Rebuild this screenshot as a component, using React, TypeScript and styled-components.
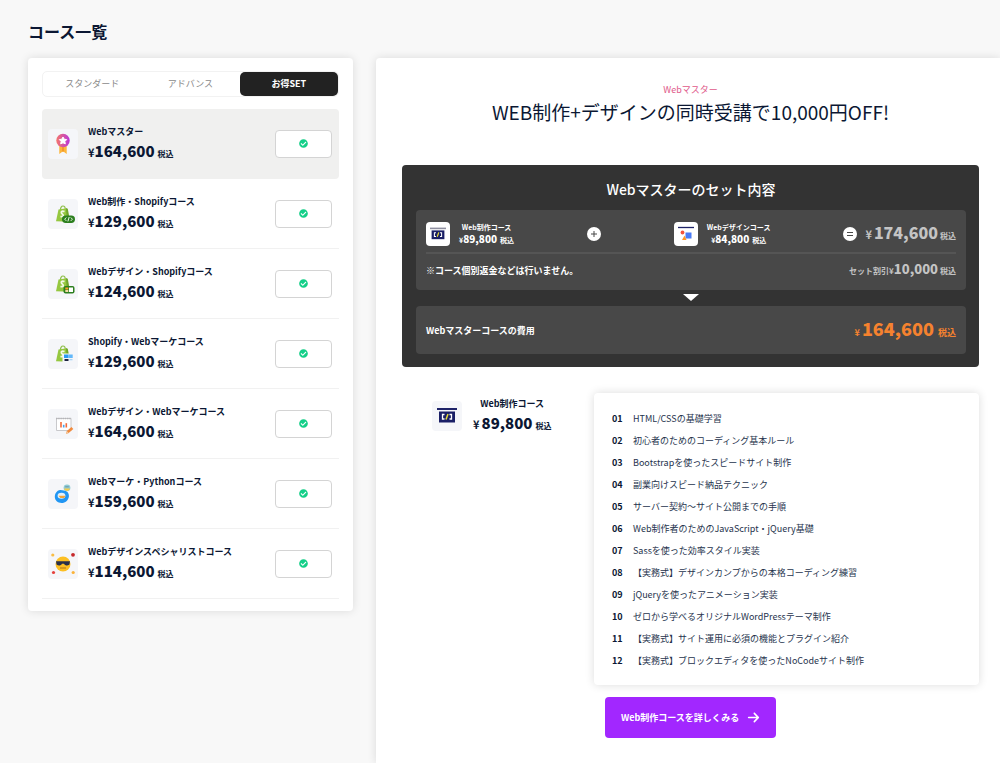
import React, { useState } from 'react';
import styled, { createGlobalStyle } from 'styled-components';
import { FaCheckCircle } from 'react-icons/fa';
import { FaArrowRight } from 'react-icons/fa6';

const GlobalStyle = createGlobalStyle`
  * { box-sizing: border-box; }
  body {
    margin: 0;
    background: #f8f8f8;
    color: #0b1733;
    font-family: "Noto Sans CJK JP", "Noto Sans", sans-serif;
    font-size: 9px;
  }
  h1, h2, h3, p, ul, ol { margin: 0; padding: 0; }
  ul, ol { list-style: none; }
  button { font: inherit; cursor: pointer; }
`;

const Page = styled.div`
  display: flex;
  flex-direction: column;
  min-height: 100vh;
  padding-left: 28px;
  overflow: hidden;
`;

const PageTitle = styled.h1`
  padding: 19px 0 15px;
  font-size: 16px;
  line-height: 24px;
  font-weight: 700;
`;

const Columns = styled.div`
  flex: 1;
  display: grid;
  grid-template-columns: 325px minmax(0, 1fr);
  gap: 23px;
`;

const Sidebar = styled.aside`
  align-self: start;
  padding: 13px 14px 12px;
  background: #fff;
  border-radius: 4px;
  box-shadow: 0 0 10px rgba(0, 0, 0, 0.12);
`;

const Tabs = styled.div`
  display: grid;
  grid-template-columns: repeat(3, 1fr);
  margin-bottom: 12px;
  border: 1px solid #f2f2f2;
  border-radius: 5px;
`;

const Tab = styled.button<{ $active: boolean }>`
  height: 24px;
  padding: 0 0 2px;
  border: 0;
  border-radius: 5px;
  background: ${(p) => (p.$active ? '#222' : 'transparent')};
  color: ${(p) => (p.$active ? '#fff' : '#8a8a8a')};
  font-weight: ${(p) => (p.$active ? 700 : 400)};
`;

const CourseRow = styled.li<{ $selected: boolean }>`
  display: flex;
  align-items: center;
  gap: 10px;
  height: 70px;
  padding: 0 7px 0 6px;
  border-bottom: 1px solid ${(p) => (p.$selected ? 'transparent' : '#f1f1f1')};
  border-radius: ${(p) => (p.$selected ? '4px' : '0')};
  background: ${(p) => (p.$selected ? '#f0f0ef' : 'transparent')};
`;

const IconTile = styled.span<{ $size: number; $solid?: boolean }>`
  flex: none;
  display: grid;
  place-items: center;
  width: ${(p) => p.$size}px;
  height: ${(p) => p.$size}px;
  border-radius: 4px;
  background: ${(p) => (p.$solid ? '#fff' : '#f5f6f9')};
  svg { display: block; }
`;

const CourseText = styled.div<{ $centered?: boolean }>`
  flex: ${(p) => (p.$centered ? 'none' : '1')};
  padding-top: 2px;
  text-align: ${(p) => (p.$centered ? 'center' : 'left')};
`;

const CourseName = styled.h3<{ $small?: boolean }>`
  font-size: ${(p) => (p.$small ? 7 : 9)}px;
  line-height: ${(p) => (p.$small ? 10 : 14)}px;
  font-weight: 700;
`;

const PriceLine = styled.p<{ $size: number; $height: number; $color?: string; $centered?: boolean }>`
  display: flex;
  align-items: baseline;
  justify-content: ${(p) => (p.$centered ? 'center' : 'flex-start')};
  color: ${(p) => p.$color ?? 'inherit'};
  line-height: ${(p) => p.$height}px;
  font-weight: 700;
  white-space: nowrap;
  strong { font-size: ${(p) => p.$size}px; }
`;

const Yen = styled.span<{ $size: number; $gap?: number }>`
  font-size: ${(p) => p.$size}px;
  margin-right: ${(p) => p.$gap ?? 0}px;
`;

const Tax = styled.small<{ $size: number; $gap?: number }>`
  font-size: ${(p) => p.$size}px;
  margin-left: ${(p) => p.$gap ?? 3}px;
`;

const CheckButton = styled.button`
  display: grid;
  place-items: center;
  width: 57px;
  height: 28px;
  padding: 0;
  border: 1px solid #d4d4d4;
  border-radius: 4px;
  background: #fff;
  color: #14cf88;
`;

const Detail = styled.main`
  padding: 24px 21px 25px 26px;
  background: #fff;
  border-top-left-radius: 4px;
  box-shadow: 0 0 10px rgba(0, 0, 0, 0.12);
`;

const DetailHead = styled.header`
  margin-bottom: 39px;
  text-align: center;
`;

const Kicker = styled.p`
  color: #e0598a;
  line-height: 16px;
`;

const Headline = styled.h2`
  font-size: 19px;
  line-height: 28px;
  font-weight: 400;
`;

const SetPanel = styled.section`
  padding: 12px 13px 13px 14px;
  border-radius: 4px;
  background: #333;
  color: #fff;
`;

const SetTitle = styled.h3`
  margin-bottom: 9px;
  font-size: 14px;
  line-height: 24px;
  font-weight: 500;
  text-align: center;
`;

const SetBox = styled.div`
  padding: 0 10px;
  border-radius: 4px;
  background: #484848;
`;

const SetRow = styled.div<{ $height: number; $top?: number; $bottom?: number; $line?: boolean }>`
  display: flex;
  align-items: center;
  justify-content: space-between;
  height: ${(p) => p.$height}px;
  padding-top: ${(p) => p.$top ?? 0}px;
  padding-bottom: ${(p) => p.$bottom ?? 0}px;
  border-bottom: ${(p) => (p.$line ? '2px solid #555' : '0')};
  font-weight: 700;
`;

const Group = styled.div<{ $gap: number }>`
  display: flex;
  align-items: center;
  gap: ${(p) => p.$gap}px;
`;

const Down = styled.svg`
  display: block;
  margin: 4px auto 5px;
`;

const CourseDetail = styled.section`
  display: grid;
  grid-template-columns: 192px minmax(0, 1fr);
  margin-top: 26px;
`;

const CourseSummary = styled.div`
  display: flex;
  align-items: flex-start;
  gap: 11px;
  padding: 2px 0 0 30px;
  ${IconTile} { margin-top: 6px; }
`;

const Lessons = styled.ol`
  padding: 15px 18px 13px;
  border-radius: 4px;
  background: #fff;
  box-shadow: 0 0 10px rgba(0, 0, 0, 0.14);
`;

const Lesson = styled.li`
  display: grid;
  grid-template-columns: 21px minmax(0, 1fr);
  line-height: 22px;
  color: #26334d;
  b { color: #0b1733; }
`;

const MoreLink = styled.a`
  display: inline-flex;
  align-items: center;
  justify-content: center;
  gap: 8px;
  height: 41px;
  margin: 12px 0 0 11px;
  padding: 0 16px;
  border-radius: 4px;
  background: #a227ff;
  color: #fff;
  font-weight: 700;
  text-decoration: none;
`;

const Medal = () => (
  <svg width="18" height="24" viewBox="0 0 18 24" aria-hidden="true">
    <defs>
      <linearGradient id="medal" x1="0" x2="1">
        <stop offset="0" stopColor="#f4766c" />
        <stop offset="1" stopColor="#b936d8" />
      </linearGradient>
    </defs>
    <path d="M5.300 12v10l3.700-2.700 3.700 2.700V12z" fill="#fcb53b" />
    <path d="M8 13v7l1-.8 1 .8V13z" fill="#f39a2b" />
    <circle cx="9" cy="8.500" r="6.700" fill="url(#medal)" />
    <path d="M9 5l1.200 2.200 2.500.4-1.800 1.800.4 2.500L9 10.800l-2.300 1.100.4-2.500-1.800-1.800 2.500-.4z" fill="#fff" stroke="#fff" strokeWidth="1" strokeLinejoin="round" />
  </svg>
);

const Bag = ({ kind }: { kind: 'code' | 'design' | 'market' }) => (
  <svg width="30" height="30" viewBox="0 0 30 30" aria-hidden="true">
    <path d="M12.500 11c0-2.500 1-4 2.500-4s2.300 1.500 2.300 3.500" fill="none" stroke="#8fbf4a" strokeWidth="1.200" />
    <path d="M10.500 10.500l8.500-1.300 2.500 13.500-13.500-.4z" fill="#95c740" />
    <path d="M18 9.300l1.800.5 2.200 12.500-3 .5z" fill="#6fa52a" />
    <path d="M16.500 12.600c-2.600-1.400-4.200.7-2.300 2.300 2 1.600 1.200 3.600-1.700 2.400" fill="none" stroke="#f4f9e8" strokeWidth="1.800" />
    {kind === 'code' && (
      <>
        <rect x="14" y="16.500" width="13" height="7.500" rx="3.700" fill="#2c7f1f" />
        <path d="M18.300 18.500l-1.600 1.700 1.600 1.700M22.800 18.500l1.600 1.700-1.600 1.700M21.200 18l-1.300 4.400" fill="none" stroke="#fff" strokeWidth=".9" />
      </>
    )}
    {kind === 'design' && (
      <>
        <rect x="15.500" y="17" width="11" height="7.500" rx="2" fill="#2c7f1f" />
        <rect x="17.300" y="18.500" width="3" height="2" fill="#ff9c2a" />
        <rect x="17.300" y="21" width="3" height="2" fill="#f4d9a4" />
        <rect x="21" y="18.500" width="4" height="4.500" fill="#fff" />
      </>
    )}
    {kind === 'market' && (
      <>
        <rect x="14.500" y="14.500" width="12" height="9" fill="#f5f6f9" />
        <rect x="16" y="15.500" width="4.200" height="3.500" fill="#2c9bf5" />
        <rect x="20.200" y="15.500" width="4.500" height="3.500" fill="#63b8fa" />
        <rect x="16.500" y="20" width="4" height="2" fill="#1c2340" />
        <rect x="21.500" y="20" width="3" height="1.300" fill="#a6d5f7" />
      </>
    )}
  </svg>
);

const ChartBoard = () => (
  <svg width="30" height="30" viewBox="0 0 30 30" aria-hidden="true">
    <path d="M8.500 9.500h14.500v12h-14.500z" fill="#fff" stroke="#c9c9cc" />
    <path d="M8 9.500h15.500" stroke="#b5b5b8" strokeWidth="1.400" strokeDasharray="1.500 .7" />
    <path d="M13 13v5.500" stroke="#f26b3a" strokeWidth="1.600" />
    <path d="M15.700 15.800v2.700" stroke="#4aa3ec" strokeWidth="1.600" />
    <path d="M18.300 14.200v4.300" stroke="#f26b3a" strokeWidth="1.600" />
    <path d="M18 25l.8-2.900 4.700-4.200 1.800 2-4.600 4.200z" fill="#f28a3c" />
    <path d="M18 25l.8-2.900 1.900 2z" fill="#f3cda5" />
  </svg>
);

const PythonMarket = () => (
  <svg width="30" height="30" viewBox="0 0 30 30" aria-hidden="true">
    <path d="M9.500 12c2.500-1.800 4.300-.8 6.500-.6 3 .3 5.300 2.600 4.900 6-.4 3.600-3.600 6.600-7.300 6.600-3.900 0-6.800-2.700-6.800-6.200 0-2.500 1-4.200 2.700-5.800z" fill="#2196f3" />
    <ellipse cx="13.500" cy="16.800" rx="3.900" ry="3" fill="#e4f2fb" />
    <path d="M10.500 16.800h7l-1.200 2.200h-4z" fill="#f0a53c" />
    <circle cx="19" cy="8.800" r="3.400" fill="#8fcbd4" />
    <path d="M16 9.600h6c-.4 1.600-1.600 2.500-3 2.500s-2.600-.9-3-2.500z" fill="#f5cd4b" />
    <path d="M17.200 7.800h3.600" stroke="#6b95a4" />
  </svg>
);

const CoolFace = () => (
  <svg width="30" height="30" viewBox="0 0 30 30" aria-hidden="true">
    <circle cx="15" cy="15" r="7.500" fill="#fcbf24" />
    <path d="M8 12.300h14l-.5 3c-.4 1.500-4.700 1.700-5.500-.6h-2c-.8 2.300-5 2.100-5.500.6z" fill="#29304a" />
    <path d="M12 19h6" stroke="#b0741b" />
    <circle cx="4.800" cy="6" r="1.600" fill="#f9bd45" />
    <circle cx="25" cy="5.800" r="1.900" fill="#c6292c" />
    <circle cx="5.500" cy="23.500" r="1.600" fill="#e5403c" />
    <circle cx="25.200" cy="23.500" r="1.600" fill="#fbb33a" />
  </svg>
);

const CodeScreen = ({ size, muted }: { size: number; muted?: boolean }) => (
  <svg width={size} height={size} viewBox="0 0 20 20" aria-hidden="true">
    <path d="M0 3h20" stroke={muted ? '#8f8fa0' : '#1e2368'} strokeWidth="2" />
    <path d="M2 5.500h16v11H2z" fill="#1a1f66" />
    <path d="M7.500 8.500H5.500v4.500h2M12.500 8.500h2v4.500h-2" fill="none" stroke="#fff" strokeWidth="1.300" />
    <path d="M11 8l-2 5.500" stroke="#e8dc35" strokeWidth="1.500" />
  </svg>
);

const DesignScreen = () => (
  <svg width="18" height="18" viewBox="0 0 18 18" aria-hidden="true">
    <path d="M1 2.500h16" stroke="#1e2368" strokeWidth="1.300" />
    <rect x="8.500" y="7.500" width="6" height="6" fill="#4a7bf5" />
    <circle cx="5.500" cy="7.500" r="1.900" fill="#f4533c" />
    <path d="M7.500 10.500l2 4.500h-4.500z" fill="#ff9428" />
  </svg>
);

const SignIcon = ({ kind }: { kind: 'plus' | 'equals' }) => (
  <svg width="14" height="14" viewBox="0 0 14 14" aria-hidden="true">
    <circle cx="7" cy="7" r="7" fill="#fff" />
    <path d={kind === 'plus' ? 'M4 7h6M7 4v6' : 'M4 5.500h6M4 8.500h6'} stroke="#484848" />
  </svg>
);

const courses = [
  { name: 'Webマスター', price: '164,600', icon: <Medal /> },
  { name: 'Web制作・Shopifyコース', price: '129,600', icon: <Bag kind="code" /> },
  { name: 'Webデザイン・Shopifyコース', price: '124,600', icon: <Bag kind="design" /> },
  { name: 'Shopify・Webマーケコース', price: '129,600', icon: <Bag kind="market" /> },
  { name: 'Webデザイン・Webマーケコース', price: '164,600', icon: <ChartBoard /> },
  { name: 'Webマーケ・Pythonコース', price: '159,600', icon: <PythonMarket /> },
  { name: 'Webデザインスペシャリストコース', price: '114,600', icon: <CoolFace /> },
];

const tabs = ['スタンダード', 'アドバンス', 'お得SET'];

const lessons = [
  'HTML/CSSの基礎学習',
  '初心者のためのコーディング基本ルール',
  'Bootstrapを使ったスピードサイト制作',
  '副業向けスピード納品テクニック',
  'サーバー契約〜サイト公開までの手順',
  'Web制作者のためのJavaScript・jQuery基礎',
  'Sassを使った効率スタイル実装',
  '【実務式】デザインカンプからの本格コーディング練習',
  'jQueryを使ったアニメーション実装',
  'ゼロから学べるオリジナルWordPressテーマ制作',
  '【実務式】サイト運用に必須の機能とプラグイン紹介',
  '【実務式】ブロックエディタを使ったNoCodeサイト制作',
];

const SetCourse = ({ name, price, icon }: { name: string; price: string; icon: React.ReactNode }) => (
  <Group $gap={9}>
    <IconTile $size={24} $solid>{icon}</IconTile>
    <CourseText $centered>
      <CourseName $small>{name}</CourseName>
      <PriceLine $size={10} $height={13} $centered>
        <Yen $size={7}>¥</Yen>
        <strong>{price}</strong>
        <Tax $size={7}>税込</Tax>
      </PriceLine>
    </CourseText>
  </Group>
);

export default function App() {
  const [tab, setTab] = useState(2);
  const [selected, setSelected] = useState(0);

  return (
    <>
      <GlobalStyle />
      <Page>
        <PageTitle>コース一覧</PageTitle>
        <Columns>
          <Sidebar>
            <Tabs role="tablist">
              {tabs.map((label, i) => (
                <Tab key={label} role="tab" aria-selected={tab === i} $active={tab === i} onClick={() => setTab(i)}>
                  {label}
                </Tab>
              ))}
            </Tabs>
            <ul>
              {courses.map((course, i) => (
                <CourseRow key={course.name} $selected={selected === i}>
                  <IconTile $size={30}>{course.icon}</IconTile>
                  <CourseText>
                    <CourseName>{course.name}</CourseName>
                    <PriceLine $size={15} $height={23}>
                      <Yen $size={11}>¥</Yen>
                      <strong>{course.price}</strong>
                      <Tax $size={8}>税込</Tax>
                    </PriceLine>
                  </CourseText>
                  <CheckButton aria-label={course.name} onClick={() => setSelected(i)}>
                    <FaCheckCircle size={9} />
                  </CheckButton>
                </CourseRow>
              ))}
            </ul>
          </Sidebar>

          <Detail>
            <DetailHead>
              <Kicker>Webマスター</Kicker>
              <Headline>WEB制作+デザインの同時受講で10,000円OFF!</Headline>
            </DetailHead>

            <SetPanel>
              <SetTitle>Webマスターのセット内容</SetTitle>
              <SetBox>
                <SetRow $height={44} $top={5} $line>
                  <SetCourse name="Web制作コース" price="89,800" icon={<CodeScreen size={16} muted />} />
                  <SignIcon kind="plus" />
                  <SetCourse name="Webデザインコース" price="84,800" icon={<DesignScreen />} />
                  <Group $gap={8}>
                    <SignIcon kind="equals" />
                    <PriceLine $size={16} $height={24} $color="#c4c4c4">
                      <Yen $size={11} $gap={2}>¥</Yen>
                      <strong>174,600</strong>
                      <Tax $size={8} $gap={2}>税込</Tax>
                    </PriceLine>
                  </Group>
                </SetRow>
                <SetRow $height={36} $bottom={4}>
                  <p>※コース個別返金などは行いません。</p>
                  <PriceLine $size={13} $height={24} $color="#c4c4c4">
                    <Yen $size={8}>セット割引¥</Yen>
                    <strong>10,000</strong>
                    <Tax $size={8} $gap={2}>税込</Tax>
                  </PriceLine>
                </SetRow>
              </SetBox>
              <Down width="16" height="7" viewBox="0 0 16 7" aria-hidden="true">
                <path d="M0 0h16L8 7z" fill="#fff" />
              </Down>
              <SetBox>
                <SetRow $height={48}>
                  <p>Webマスターコースの費用</p>
                  <PriceLine $size={18} $height={26} $color="#f5822f">
                    <Yen $size={9} $gap={2}>¥</Yen>
                    <strong>164,600</strong>
                    <Tax $size={9} $gap={4}>税込</Tax>
                  </PriceLine>
                </SetRow>
              </SetBox>
            </SetPanel>

            <CourseDetail>
              <CourseSummary>
                <IconTile $size={30}><CodeScreen size={20} /></IconTile>
                <CourseText $centered>
                  <CourseName>Web制作コース</CourseName>
                  <PriceLine $size={15} $height={23} $centered>
                    <Yen $size={11} $gap={2}>¥</Yen>
                    <strong>89,800</strong>
                    <Tax $size={8}>税込</Tax>
                  </PriceLine>
                </CourseText>
              </CourseSummary>
              <div>
                <Lessons>
                  {lessons.map((lesson, i) => (
                    <Lesson key={lesson}>
                      <b>{String(i + 1).padStart(2, '0')}</b>
                      <span>{lesson}</span>
                    </Lesson>
                  ))}
                </Lessons>
                <MoreLink href="#web-course">
                  Web制作コースを詳しくみる
                  <FaArrowRight size={13} />
                </MoreLink>
              </div>
            </CourseDetail>
          </Detail>
        </Columns>
      </Page>
    </>
  );
}
